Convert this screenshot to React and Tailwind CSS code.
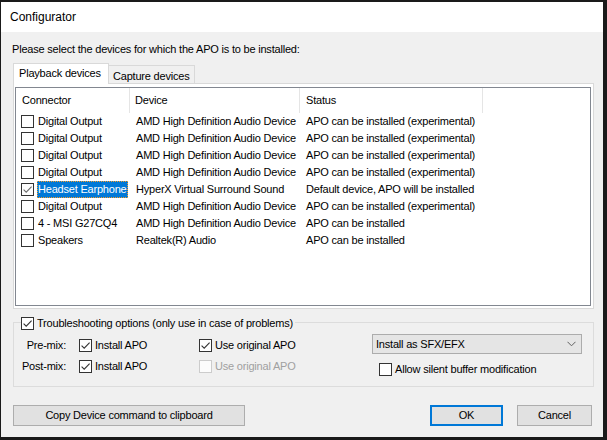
import React from "react";

const AMD = "AMD High Definition Audio Device";
const EXP = "APO can be installed (experimental)";

const devices = [
  { name: "Digital Output", device: AMD, status: EXP },
  { name: "Digital Output", device: AMD, status: EXP },
  { name: "Digital Output", device: AMD, status: EXP },
  { name: "Digital Output", device: AMD, status: EXP },
  { name: "Headset Earphone", device: "HyperX Virtual Surround Sound", status: "Default device, APO will be installed", checked: true, selected: true },
  { name: "Digital Output", device: AMD, status: EXP },
  { name: "4 - MSI G27CQ4", device: AMD, status: "APO can be installed" },
  { name: "Speakers", device: "Realtek(R) Audio", status: "APO can be installed" },
];

function Check({ checked, disabled, mark = "#333333" }) {
  return (
    <span
      className={`w-[13px] h-[13px] shrink-0 border flex items-center justify-center ${
        disabled ? "border-[#cccccc] bg-[#fcfcfc]" : "border-[#333333] bg-white"
      }`}
    >
      {checked && (
        <svg width="11" height="11" viewBox="0 0 11 11">
          <path d="M1.6 5.6 L4.2 8.2 L9.6 2.6" fill="none" stroke={mark} strokeWidth="1.1" />
        </svg>
      )}
    </span>
  );
}

function Button({ children, primary, className = "" }) {
  return (
    <div
      className={`h-[21px] flex items-center justify-center bg-[#e1e1e1] ${
        primary ? "border-2 border-[#0078d7]" : "border border-[#adadad]"
      } ${className}`}
    >
      {children}
    </div>
  );
}

export default function App() {
  return (
    <div className="w-[607px] h-[440px] bg-[#1a1a1a] pt-[2px] pl-[1px] pr-[4px] pb-[3px] flex font-['Liberation_Sans',Arial,sans-serif] text-[11px] tracking-[-0.2px] text-black leading-none">
      <div className="flex-1 flex flex-col bg-[#f0f0f0]">

        {/* title bar */}
        <div className="h-[30px] shrink-0 bg-white flex items-center pl-[9px] text-[12px] tracking-normal">
          Configurator
        </div>

        {/* prompt */}
        <p className="mt-[10px] ml-[11px] h-[15px] flex items-center">
          Please select the devices for which the APO is to be installed:
        </p>

        {/* tabs */}
        <div className="mt-[6px] h-[20px] ml-[12px] flex items-end">
          <div className="relative z-10 -mb-px h-[21px] w-[96px] bg-white border-l border-t border-r border-[#d9d9d9] flex items-start pt-[4px] pl-[5px]">
            Playback devices
          </div>
          <div className="h-[18px] w-[86px] border-t border-r border-[#d9d9d9] flex items-start pt-[5px] pl-[4px]">
            Capture devices
          </div>
        </div>

        {/* tab page */}
        <div className="ml-[12px] w-[581px] border border-[#d9d9d9] bg-white pt-[3px] pl-px pr-[2px] pb-[2px]">
          <div className="h-[219px] border border-[#828790] bg-white flex flex-col">
            <div className="h-[25px] flex shrink-0">
              <div className="w-[114px] border-r border-[#e5e5e5] flex items-center pl-[6px]">Connector</div>
              <div className="w-[170px] border-r border-[#e5e5e5] flex items-center pl-[5px]">Device</div>
              <div className="w-[183px] border-r border-[#e5e5e5] flex items-center pl-[6px]">Status</div>
            </div>
            {devices.map((d, i) => (
              <div key={i} className="h-[17px] flex items-center shrink-0">
                <div className="w-[114px] flex items-center pl-[5px]">
                  <Check checked={d.checked} mark="#6d6d6d" />
                  <span
                    className={`ml-[3px] h-[17px] flex items-center px-px whitespace-nowrap ${
                      d.selected
                        ? "bg-[#0078d7] text-white outline outline-1 outline-dotted outline-[#f59b2a] -outline-offset-1"
                        : ""
                    }`}
                  >
                    {d.name}
                  </span>
                </div>
                <div className="w-[170px] pl-[6px] whitespace-nowrap">{d.device}</div>
                <div className="w-[183px] pl-[6px] whitespace-nowrap">{d.status}</div>
              </div>
            ))}
          </div>
        </div>

        {/* troubleshooting group */}
        <div className="mt-[13px] ml-[12px] w-[581px] border border-[#dcdcdc]">
          <div className="-mt-[6px] ml-[7px] w-fit h-[13px] flex items-center bg-[#f0f0f0] pr-[2px]">
            <Check checked />
            <span className="ml-[3px]">Troubleshooting options (only use in case of problems)</span>
          </div>
          <div className="mt-[4px] pb-[9px] flex">
            <div className="w-[358px] pt-px flex flex-col">
              <div className="h-[21px] flex items-center">
                <span className="w-[52px] text-right">Pre-mix:</span>
                <div className="ml-[13px] w-[120px] flex items-center">
                  <Check checked />
                  <span className="ml-[3px]">Install APO</span>
                </div>
                <div className="flex items-center">
                  <Check checked />
                  <span className="ml-[3px]">Use original APO</span>
                </div>
              </div>
              <div className="h-[21px] flex items-center">
                <span className="w-[52px] text-right">Post-mix:</span>
                <div className="ml-[13px] w-[120px] flex items-center">
                  <Check checked />
                  <span className="ml-[3px]">Install APO</span>
                </div>
                <div className="flex items-center text-[#a0a0a0]">
                  <Check disabled />
                  <span className="ml-[3px]">Use original APO</span>
                </div>
              </div>
            </div>
            <div className="w-[210px] flex flex-col">
              <div className="h-[20px] bg-[#e5e5e5] border border-[#acacac] flex items-center pl-[3px] pr-[5px]">
                <span className="flex-1">Install as SFX/EFX</span>
                <svg width="9" height="6" viewBox="0 0 9 6">
                  <path d="M0.5 0.8 L4.5 4.8 L8.5 0.8" fill="none" stroke="#606060" strokeWidth="1" />
                </svg>
              </div>
              <div className="mt-[9px] ml-[7px] h-[13px] flex items-center">
                <Check />
                <span className="ml-[3px]">Allow silent buffer modification</span>
              </div>
            </div>
          </div>
        </div>

        {/* buttons */}
        <div className="mt-[18px] flex">
          <Button className="ml-[12px] w-[232px]">Copy Device command to clipboard</Button>
          <Button primary className="ml-auto w-[73px]">OK</Button>
          <Button className="ml-[14px] mr-[11px] w-[75px]">Cancel</Button>
        </div>

      </div>
    </div>
  );
}
